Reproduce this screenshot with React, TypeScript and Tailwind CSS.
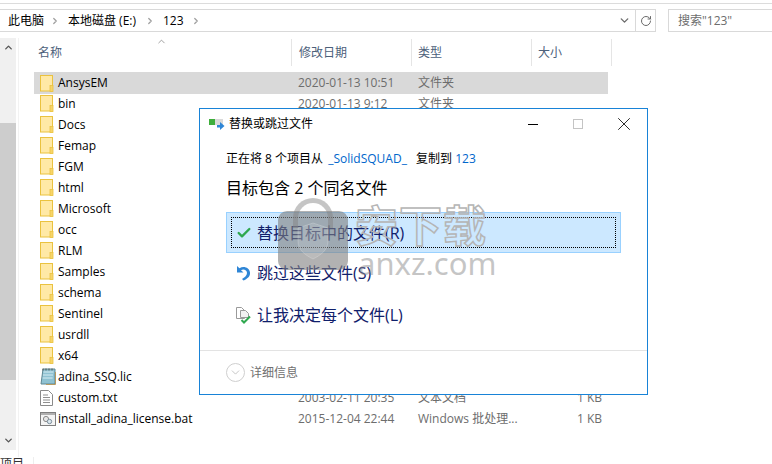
import React from 'react';
import { ChevronUp, ChevronDown, ChevronRight, RotateCw, X, Check } from 'lucide-react';

const folders = ['AnsysEM', 'bin', 'Docs', 'Femap', 'FGM', 'html', 'Microsoft', 'occ', 'RLM', 'Samples', 'schema', 'Sentinel', 'usrdll', 'x64'];

const FolderIcon = () => (
  <svg width="14" height="17" viewBox="0 0 14 17" className="shrink-0">
    <rect x="0.5" y="0.5" width="12" height="15.5" fill="#ffe9a6" stroke="#eac23f" />
    <rect x="10" y="10.5" width="3" height="6" fill="#f7d469" stroke="#eac23f" strokeWidth="0.8" />
  </svg>
);

const LicIcon = () => (
  <svg width="16" height="17" viewBox="0 0 16 17" className="shrink-0">
    <path d="M3 1h12v15H1z" fill="#8fc2d2" stroke="#5f8793" />
    <path d="M3.5 4h10M3 7h10M2.6 10h10" stroke="#d7edf3" />
    <path d="M3 0.5v2M6 0.5v2M9 0.5v2M12 0.5v2" stroke="#555" />
    <path d="M15.5 4v12.5H6" fill="none" stroke="#b59a62" />
  </svg>
);

const TxtIcon = () => (
  <svg width="13" height="16" viewBox="0 0 13 16" className="shrink-0">
    <path d="M.5.5h8l4 4v11H.5z" fill="#fff" stroke="#8a8a8a" />
    <path d="M3 5h5M3 7.5h7M3 10h7M3 12.5h7" stroke="#8f8f8f" />
  </svg>
);

const BatIcon = () => (
  <svg width="16" height="14" viewBox="0 0 16 14" className="shrink-0">
    <rect x="0.5" y="0.5" width="15" height="13" fill="#f4f4f4" stroke="#7f7f7f" />
    <rect x="1" y="1" width="14" height="2" fill="#b0b0b0" />
    <circle cx="6" cy="7" r="2.6" fill="#e8e8e8" stroke="#8a8a8a" />
    <circle cx="9.5" cy="9.5" r="2.2" fill="#dbe7ee" stroke="#7d8f9c" />
  </svg>
);

const Row = ({ icon, name, date, type, size, first }: { icon: React.ReactNode; name: string; date: string; type: string; size?: string; first?: boolean }) => (
  <div className={`flex items-center w-[574px] pl-[6px] text-[12px] ${first ? 'h-[22px] mb-[-1px] bg-[#d9d9d9]' : 'h-[21px]'}`}>
    <div className="w-[18px] flex justify-start items-center">{icon}</div>
    <div className="w-[240px] text-black whitespace-nowrap">{name}</div>
    <div className="w-[120px] text-[#6d6d6d] whitespace-nowrap">{date}</div>
    <div className="w-[120px] text-[#6d6d6d] whitespace-nowrap">{type}</div>
    <div className="w-[64px] text-right text-[#6d6d6d] whitespace-nowrap">{size}</div>
  </div>
);

const Crumb = ({ label, width }: { label: string; width: string }) => (
  <div className={`flex items-center text-[12px] text-black whitespace-nowrap ${width}`}>
    <span>{label}</span>
  </div>
);

const TitleIcon = () => (
  <svg width="16" height="12" viewBox="0 0 16 12" className="shrink-0">
    <rect x="0" y="1" width="14" height="6" fill="#d9d9d9" />
    <rect x="0" y="1" width="6" height="6" fill="#3fae3c" />
    <path d="M8 7h3V4l4.5 4-4.500 4V9.500H8z" fill="#2f86d6" />
  </svg>
);

const UndoIcon = () => (
  <svg width="15" height="16" viewBox="0 0 15 16" className="shrink-0">
    <path d="M1 1v6.500h6.500L5 5.200C7.500 3.800 11 5 11 8c0 2.500-2.500 4.500-5 6l1.500 1.500C11 14 14.500 11.500 14 7.500 13.500 3 8 0.500 3.500 3.200z" fill="#2f86d6" />
  </svg>
);

const DecideIcon = () => (
  <svg width="16" height="17" viewBox="0 0 16 17" className="shrink-0">
    <path d="M.5.5h5l3 3v8H.5z" fill="#fff" stroke="#9a9a9a" />
    <path d="M4.500 3.500h5l3 3v4h-8z" fill="#f2f2f2" stroke="#9a9a9a" />
    <path d="M5.500 13l2.500 2.500 6-6" fill="none" stroke="#2fa84f" strokeWidth="2" />
  </svg>
);

const App: React.FC = () => {
  return (
    <div className="relative w-[772px] h-[464px] overflow-hidden bg-white flex flex-col font-['Open_Sans','Noto_Sans_CJK_SC',sans-serif]">
      {/* toolbar */}
      <div className="h-[38px] shrink-0 pt-[3px]">
        <div className="h-px bg-[#dcdcdc]" />
        <div className="flex mt-[5px] h-[23px]">
          <div className="w-[656px] flex items-center border-y border-r border-[#d9d9d9] pl-[8px]">
            <Crumb label="此电脑" width="w-[42px]" />
            <ChevronRight size={10} strokeWidth={3} className="text-[#a0a0a0] mr-[8px]" />
            <Crumb label="本地磁盘 (E:)" width="w-[77px]" />
            <ChevronRight size={10} strokeWidth={3} className="text-[#a0a0a0] mr-[8px]" />
            <Crumb label="123" width="w-[28px]" />
            <ChevronRight size={10} strokeWidth={3} className="text-[#a0a0a0]" />
            <div className="flex-1" />
            <ChevronDown size={13} strokeWidth={2.5} className="text-[#6b6b6b] mr-[4px]" />
            <div className="w-[20px] h-full border-l border-[#d9d9d9] flex items-center justify-center">
              <RotateCw size={12} strokeWidth={2} className="text-[#6b6b6b]" />
            </div>
          </div>
          <div className="ml-[12px] flex-1 flex items-center border border-r-0 border-[#d9d9d9] pl-[9px] text-[12px] text-[#6d6d6d]">
            搜索"123"
          </div>
        </div>
      </div>

      {/* body */}
      <div className="flex-1 flex min-h-0">
        <div className="w-[16px] h-[412px] bg-[#f0f0f0] flex flex-col items-center shrink-0">
          <ChevronUp size={11} strokeWidth={3} className="text-[#555] mt-[4px]" />
          <div className="w-full h-[257px] bg-[#cdcdcd] mt-[70px]" />
          <div className="flex-1" />
          <ChevronDown size={11} strokeWidth={3} className="text-[#555] mb-[4px]" />
        </div>
        <div className="w-[2px]" />
        <div className="flex-1 border-l border-[#f2f2f2] pl-[15px]">
          <div className="relative h-[34px] flex items-start pt-px text-[12px] text-[#4c607a]">
            <ChevronUp size={11} strokeWidth={1.5} className="absolute left-[122px] top-[-2px] text-[#777]" />
            <div className="w-[258px] h-[27px] pl-[4px] flex items-center border-r border-[#e5e5e5]">名称</div>
            <div className="w-[120px] h-[27px] pl-[7px] flex items-center border-r border-[#e5e5e5]">修改日期</div>
            <div className="w-[120px] h-[27px] pl-[6px] flex items-center border-r border-[#e5e5e5]">类型</div>
            <div className="w-[80px] h-[27px] pl-[6px] flex items-center border-r border-[#e5e5e5]">大小</div>
          </div>
          {folders.map((name, i) => (
            <Row key={name} first={i === 0} icon={<FolderIcon />} name={name} date={i === 0 ? '2020-01-13 10:51' : '2020-01-13 9:12'} type="文件夹" />
          ))}
          <Row icon={<LicIcon />} name="adina_SSQ.lic" date="2015-12-04 22:44" type="LIC 文件" size="1 KB" />
          <Row icon={<TxtIcon />} name="custom.txt" date="2003-02-11 20:35" type="文本文档" size="1 KB" />
          <Row icon={<BatIcon />} name="install_adina_license.bat" date="2015-12-04 22:44" type="Windows 批处理..." size="1 KB" />
        </div>
      </div>

      {/* status bar */}
      <div className="h-[7px] shrink-0 flex overflow-hidden text-[12px] leading-[14px] text-[#333]">
        <div className="w-[34px] border-r border-[#eeeeee] whitespace-nowrap">项目</div>
      </div>

      {/* dialog */}
      <div className="absolute left-[199px] top-[108px] w-[449px] h-[287px] bg-white border border-[#1883d7] flex flex-col">
        <div className="h-[30px] flex items-center pl-[9px] shrink-0">
          <TitleIcon />
          <span className="ml-[4px] text-[12px] text-black">替换或跳过文件</span>
          <div className="flex-1" />
          <div className="w-[10px] h-px bg-black mr-[35px]" />
          <div className="w-[10px] h-[10px] border border-[#c4c4c4] mr-[30px]" />
          <X size={22} strokeWidth={0.9} className="text-black mr-[12px]" />
        </div>
        <div className="pl-[26px] pr-[26px] flex-1">
          <div className="mt-[10px] h-[20px] flex items-center text-[12px] text-black whitespace-nowrap">
            正在将 8 个项目从&nbsp;<span className="ml-[2px] text-[#0066cc]">_SolidSQUAD_</span>&nbsp;<span className="ml-[6px]">复制到</span>&nbsp;<span className="text-[#0066cc]">123</span>
          </div>
          <div className="mt-[9px] h-[20px] flex items-center text-[16px] text-black whitespace-nowrap">目标包含 2 个同名文件</div>
          <div className="mt-[14px] h-[41px] w-[395px] bg-[#cce8ff] border border-[#99d1ff] p-[4px]">
            <div className="h-full border border-dotted border-black flex items-center pl-[4px]">
              <Check size={16} strokeWidth={3.5} className="text-[#2fa84f] shrink-0" />
              <span className="ml-[5px] text-[16px] text-[#10206b] whitespace-nowrap">替换目标中的文件(R)</span>
            </div>
          </div>
          <div className="mt-[9px] h-[22px] flex items-center pl-[10px]">
            <UndoIcon />
            <span className="ml-[6px] text-[16px] text-[#10206b] whitespace-nowrap">跳过这些文件(S)</span>
          </div>
          <div className="mt-[20px] h-[22px] flex items-center pl-[10px]">
            <DecideIcon />
            <span className="ml-[5px] text-[16px] text-[#10206b] whitespace-nowrap">让我决定每个文件(L)</span>
          </div>
        </div>
        <div className="h-[44px] shrink-0 border-t border-[#e3e3e3] flex items-center pl-[26px]">
          <div className="w-[19px] h-[19px] rounded-full border border-[#cfcfcf] flex items-center justify-center">
            <ChevronDown size={13} strokeWidth={1.2} className="text-[#a8a8a8]" />
          </div>
          <span className="ml-[5px] text-[12px] text-[#707070]">详细信息</span>
        </div>
      </div>

      {/* watermark */}
      <div className="absolute left-[278px] top-[198px] w-[70px] h-[72px] pointer-events-none">
        <div className="absolute left-[15px] top-0 w-[40px] h-[30px] rounded-t-[20px] border-[5px] border-b-0 border-[#8c8c8c]/50" />
        <div className="absolute left-0 top-[13px] w-[70px] h-[59px] rounded-[9px] bg-[#7f7f7f]/60 flex items-center justify-center">
          <svg width="34" height="38" viewBox="0 0 34 38">
            <path d="M17 1l15 5v13c0 9-7 14-15 18C9 33 2 28 2 19V6z" fill="#ffffff" fillOpacity="0.12" stroke="#ffffff" strokeOpacity="0.2" />
          </svg>
        </div>
      </div>
      <div className="absolute left-[355px] top-[200px] pointer-events-none text-[43px] leading-[52px] font-bold tracking-[1px] text-transparent [-webkit-text-stroke:1.5px_#b5b5b5] whitespace-nowrap">安下载</div>
      <div className="absolute left-[358px] top-[244px] pointer-events-none text-[31px] leading-[38px] text-[#8c8c8c]/50 whitespace-nowrap font-['Noto_Sans',sans-serif]">anxz.com</div>
    </div>
  );
};

export default App;
